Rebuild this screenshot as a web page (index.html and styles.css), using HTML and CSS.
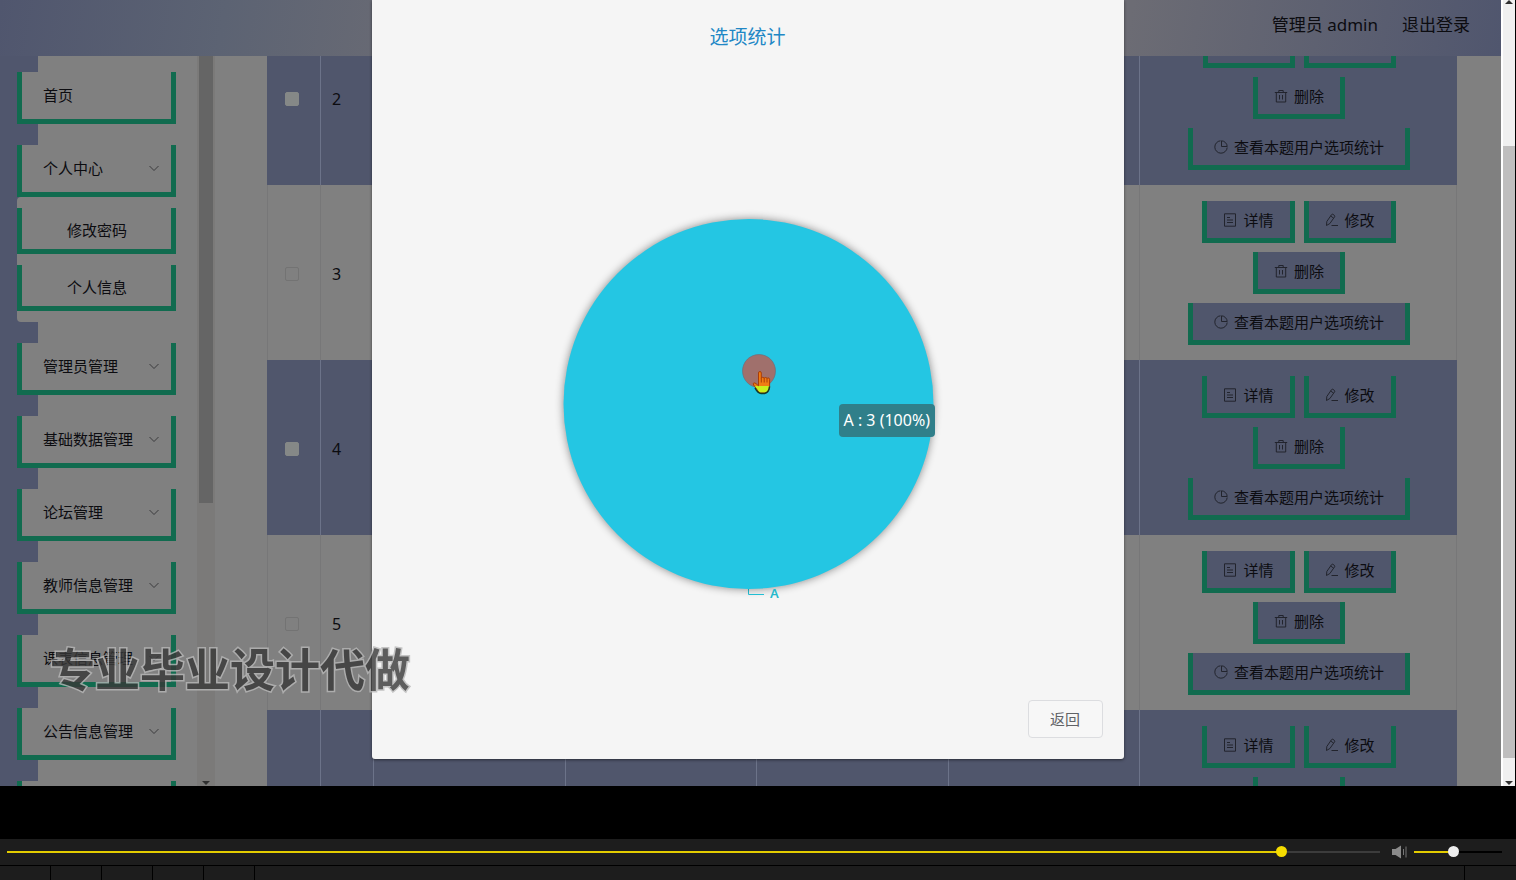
FILE: index.html
```
<!DOCTYPE html>
<html lang="zh-CN">
<head>
  <meta charset="UTF-8">
  <meta name="viewport" content="width=device-width, initial-scale=1.0">
  <title>选项统计</title>
  <link rel="stylesheet" href="styles.css">
</head>
<body>
  <!-- shared icons -->
  <svg class="sprite" aria-hidden="true">
    <symbol id="icon-down" viewBox="0 0 10 10"><path d="M0.5 3 L5 7.5 L9.5 3"/></symbol>
    <symbol id="icon-detail" viewBox="0 0 14 14"><path d="M1.500 0.800h11v12.400h-11z M4 4.500h3 M4 7h6 M4 9.500h6"/></symbol>
    <symbol id="icon-edit" viewBox="0 0 14 14"><path d="M1.800 8.500 L6.600 1.600 Q7.200 0.800 8 1.400 L9.400 2.400 Q10.200 3 9.600 3.800 L4.900 10.500 L1.500 12.500 Z M5.600 3 L8.500 5 M6.500 12.500h6.500"/></symbol>
    <symbol id="icon-delete" viewBox="0 0 14 14"><path d="M0.800 3.500h12.400 M2.300 3.500v9.500h9.400v-9.500 M4.800 3.500v-2h4.400v2 M5.500 6v4.500 M8.500 6v4.500"/></symbol>
    <symbol id="icon-pie" viewBox="0 0 14 14"><path d="M6.500 0.800 A6.200 6.200 0 1 0 13.200 7.500 M7.500 0.800 A6 6 0 0 1 13.200 6.500 H7.500 Z"/></symbol>
  </svg>

  <div class="player">
    <div class="screen">
      <div class="app">
        <header class="header">
          <span>管理员 admin</span>
          <a href="#">退出登录</a>
        </header>

        <div class="layout">
          <nav class="sidebar">
            <ul class="menu">
              <li><a class="menu-item" href="#">首页</a></li>
              <li>
                <a class="menu-item" href="#">个人中心<svg class="arrow"><use href="#icon-down"/></svg></a>
                <ul class="submenu">
                  <li><a class="submenu-item" href="#">修改密码</a></li>
                  <li><a class="submenu-item" href="#">个人信息</a></li>
                </ul>
              </li>
              <li><a class="menu-item" href="#">管理员管理<svg class="arrow"><use href="#icon-down"/></svg></a></li>
              <li><a class="menu-item" href="#">基础数据管理<svg class="arrow"><use href="#icon-down"/></svg></a></li>
              <li><a class="menu-item" href="#">论坛管理<svg class="arrow"><use href="#icon-down"/></svg></a></li>
              <li><a class="menu-item" href="#">教师信息管理<svg class="arrow"><use href="#icon-down"/></svg></a></li>
              <li><a class="menu-item" href="#">课表信息管理<svg class="arrow"><use href="#icon-down"/></svg></a></li>
              <li><a class="menu-item" href="#">公告信息管理<svg class="arrow"><use href="#icon-down"/></svg></a></li>
              <li><a class="menu-item" href="#" aria-label="更多"></a></li>
            </ul>
            <div class="side-scroll"><div class="side-thumb"></div><div class="caret-down"></div></div>
          </nav>

          <main class="content">
            <table class="table">
              <colgroup>
                <col class="col-check"><col class="col-index"><col><col><col><col><col class="col-actions">
              </colgroup>
              <tbody>
                <tr>
                  <td><input type="checkbox" aria-label="选择 2"></td><td>2</td><td></td><td></td><td></td><td></td>
                  <td>
                    <div class="actions">
                      <button class="btn" aria-label="详情"></button>
                      <button class="btn" aria-label="修改"></button>
                      <button class="btn"><svg><use href="#icon-delete"/></svg>删除</button>
                      <button class="btn btn-wide"><svg><use href="#icon-pie"/></svg>查看本题用户选项统计</button>
                    </div>
                  </td>
                </tr>
                <tr>
                  <td><input type="checkbox" aria-label="选择 3"></td><td>3</td><td></td><td></td><td></td><td></td>
                  <td>
                    <div class="actions">
                      <button class="btn"><svg><use href="#icon-detail"/></svg>详情</button>
                      <button class="btn"><svg><use href="#icon-edit"/></svg>修改</button>
                      <button class="btn"><svg><use href="#icon-delete"/></svg>删除</button>
                      <button class="btn btn-wide"><svg><use href="#icon-pie"/></svg>查看本题用户选项统计</button>
                    </div>
                  </td>
                </tr>
                <tr>
                  <td><input type="checkbox" aria-label="选择 4"></td><td>4</td><td></td><td></td><td></td><td></td>
                  <td>
                    <div class="actions">
                      <button class="btn"><svg><use href="#icon-detail"/></svg>详情</button>
                      <button class="btn"><svg><use href="#icon-edit"/></svg>修改</button>
                      <button class="btn"><svg><use href="#icon-delete"/></svg>删除</button>
                      <button class="btn btn-wide"><svg><use href="#icon-pie"/></svg>查看本题用户选项统计</button>
                    </div>
                  </td>
                </tr>
                <tr>
                  <td><input type="checkbox" aria-label="选择 5"></td><td>5</td><td></td><td></td><td></td><td></td>
                  <td>
                    <div class="actions">
                      <button class="btn"><svg><use href="#icon-detail"/></svg>详情</button>
                      <button class="btn"><svg><use href="#icon-edit"/></svg>修改</button>
                      <button class="btn"><svg><use href="#icon-delete"/></svg>删除</button>
                      <button class="btn btn-wide"><svg><use href="#icon-pie"/></svg>查看本题用户选项统计</button>
                    </div>
                  </td>
                </tr>
                <tr>
                  <td></td><td></td><td></td><td></td><td></td><td></td>
                  <td>
                    <div class="actions">
                      <button class="btn"><svg><use href="#icon-detail"/></svg>详情</button>
                      <button class="btn"><svg><use href="#icon-edit"/></svg>修改</button>
                      <button class="btn" aria-label="删除"></button>
                    </div>
                  </td>
                </tr>
              </tbody>
            </table>
          </main>
        </div>

        <div class="overlay">
          <section class="dialog" role="dialog" aria-labelledby="dialog-title">
            <h1 class="dialog-title" id="dialog-title">选项统计</h1>
            <div class="chart">
              <svg class="pie" viewBox="0 0 752 640">
                <path d="M376.500 528 V534.500 H392" fill="none" stroke="#24c6dc" stroke-width="1"/>
                <circle class="slice" cx="376.500" cy="344" r="185"/>
                <text x="398" y="538">A</text>
              </svg>
              <div class="tooltip">A : 3 (100%)</div>
              <svg class="pointer" viewBox="0 0 34 42">
                <defs>
                  <linearGradient id="hand" gradientUnits="userSpaceOnUse" x1="0" y1="0" x2="0" y2="42">
                    <stop offset="0.76" stop-color="#f07c14"/>
                    <stop offset="0.76" stop-color="#c8f01e"/>
                  </linearGradient>
                </defs>
                <circle cx="17" cy="17" r="16.500" fill="#a0706c" stroke="#6d6a75" stroke-width="0.600"/>
                <path d="M16.500 30 V19 q0-1.500 1.400-1.500 t1.400 1.500 v5.500 q0-1.200 1.400-1.200 t1.500 1.200 q0-1 1.400-1 t1.400 1.200 q0-.8 1.200-.8 t1.400 1.400 V34 q-1 5-5 5 h-4 q-2 0-4-4 l-3-4 q-1-2 .5-2.200 q1.500 0 4.400 3z" fill="url(#hand)" stroke="#a83c08" stroke-width="1"/>
                <path d="M13 34 q3 5.500 6 5.500 h3.500 q4.500-1 5-7" fill="none" stroke="#143c28" stroke-width="1.500"/>
                <path d="M19.300 24.500v4 M22.200 24.500v4 M25 25v3.500" fill="none" stroke="#a83c08" stroke-width="1"/>
              </svg>
            </div>
            <div class="dialog-footer"><button class="back">返回</button></div>
          </section>
        </div>
      </div>

      <div class="page-scroll">
        <div class="caret-up"></div>
        <div class="page-thumb"></div>
        <div class="caret-down"></div>
      </div>
      <div class="watermark">专业毕业设计代做</div>
    </div>

    <div class="controls">
      <input class="range seek" type="range" min="0" max="1000" value="932" aria-label="播放进度">
      <svg class="speaker" viewBox="0 0 16 14">
        <path d="M0 4h3.500L9 0.500v13L3.500 10H0z" fill="#8a8a8a"/>
        <path d="M11.500 4v6 M14 1.500v11" stroke="#777" stroke-width="1"/>
      </svg>
      <input class="range volume" type="range" min="0" max="100" value="44" aria-label="音量">
    </div>
    <div class="status">
      <span></span><span></span><span></span><span></span><span></span>
      <span class="status-end"></span>
    </div>
  </div>
</body>
</html>
```

FILE: styles.css
```
* {
  box-sizing: border-box;
}

body {
  margin: 0;
  background: #000;
  color: #0c0c10;
  font-family: "Noto Sans", "Noto Sans CJK SC", sans-serif;
  font-size: 15px;
}

ul {
  list-style: none;
  margin: 0;
  padding: 0;
}

a {
  color: inherit;
  text-decoration: none;
}

button {
  font: inherit;
  color: inherit;
}

.sprite {
  position: absolute;
  width: 0;
  height: 0;
}

.player {
  display: flex;
  flex-direction: column;
  height: 100vh;
  overflow: hidden;
}

.screen {
  position: relative;
  display: flex;
  flex: 1;
  min-height: 0;
  margin-bottom: 53px;
  overflow: hidden;
}

.app {
  position: relative;
  display: flex;
  flex-direction: column;
  flex: 1;
  min-width: 0;
  background: #808080;
}

/* Top bar */
.header {
  display: flex;
  flex: none;
  align-items: center;
  justify-content: flex-end;
  gap: 24px;
  height: 56px;
  padding: 0 31px 10px 0;
  background: linear-gradient(100deg, #50566e, #5c6373 15%, #6c6c74 30%, #6c6c74 75%, #50566e);
  font-size: 17px;
}

.layout {
  display: flex;
  flex: 1;
  min-height: 0;
  overflow: hidden;
}

/* Sidebar */
.sidebar {
  display: flex;
  flex: none;
  justify-content: space-between;
  width: 215px;
  background: linear-gradient(to right, #50566d 38px, #808080 38px);
}

.menu {
  display: flex;
  flex-direction: column;
  gap: 21px;
  width: 176px;
  padding: 16px 0 0 17px;
}

.menu-item,
.submenu-item {
  display: flex;
  align-items: center;
  justify-content: space-between;
  height: 52px;
  padding: 0 12px 2px 21px;
  border: 5px solid #116b4f;
  border-top: 0;
  background: #808080;
}

.submenu {
  display: flex;
  flex-direction: column;
  gap: 11px;
  padding: 11px 0;
  border-radius: 4px;
  background: #808080;
}

.submenu-item {
  height: 46px;
  padding: 2px 0 0 45px;
}

.arrow {
  width: 10px;
  height: 10px;
  fill: none;
  stroke: #3a3a3d;
}

.side-scroll {
  display: flex;
  flex-direction: column;
  align-items: center;
  width: 18px;
  padding-bottom: 1px;
  background: #7b7a79;
}

.side-thumb {
  width: 14px;
  height: 447px;
  margin-bottom: auto;
  background: #656565;
}

.caret-down,
.caret-up {
  flex: none;
  width: 8px;
  height: 4px;
  background: #303030;
  clip-path: polygon(0 0, 100% 0, 50% 100%);
}

.caret-up {
  clip-path: polygon(0 100%, 100% 100%, 50% 0);
}

/* Table, scrolled partly under the top bar */
.content {
  flex: 1;
  min-width: 0;
  padding: 0 44px 0 52px;
}

.table {
  width: 100%;
  margin-top: -46px;
  border-collapse: separate;
  border-spacing: 0;
  table-layout: fixed;
  font-size: 16px;
}

.col-check {
  width: 54px;
}

.col-index {
  width: 53px;
}

.col-actions {
  width: 317px;
}

.table td {
  height: 175px;
  padding: 2px 11px 0;
  border-right: 1px solid #777778;
}

.table td:first-child {
  padding: 2px 0 0 17px;
  border-left: 1px solid #777778;
}

.table tr:nth-child(odd) td {
  border-color: #6c7389;
  background: #50566c;
}

.table tr:nth-child(odd) td:first-child {
  border-left-color: #50566c;
}

.table tr:nth-child(odd) td:last-child {
  border-right-color: #50566c;
}

.table td:last-child {
  padding: 16px 10px 15px 12px;
  vertical-align: top;
}

.table input {
  display: block;
  width: 14px;
  height: 14px;
  margin: 0;
  border: 1px solid #737373;
  border-radius: 2px;
  appearance: none;
}

.table tr:nth-child(odd) input {
  border-color: #858887;
  background: #858887;
}

.actions {
  display: flex;
  flex-wrap: wrap;
  justify-content: center;
  gap: 9px;
  padding: 0 50px;
}

.actions .btn:nth-child(3) {
  margin: 0 50px;
}

.actions .btn-wide {
  margin: 0 -14px;
}

.btn {
  display: flex;
  flex: none;
  align-items: center;
  gap: 6px;
  min-width: 92px;
  height: 42px;
  padding: 0 16px;
  border: 5px solid #116b4f;
  border-top: 0;
  background: #50566c;
  font-size: 15px;
  white-space: nowrap;
}

.btn-wide {
  padding: 0 21px;
}

.btn svg {
  width: 14px;
  height: 14px;
  fill: none;
  stroke: #22242d;
}

/* Statistics dialog */
.overlay {
  position: absolute;
  inset: 0 6px 0 0;
  display: flex;
  align-items: flex-start;
  justify-content: center;
}

.dialog {
  flex: 0 1 752px;
  min-width: 0;
  border-radius: 0 0 3px 3px;
  background: #f5f5f5;
  box-shadow: 0 1px 3px rgba(0, 0, 0, 0.5);
}

.dialog-title {
  margin: 0;
  padding-top: 24px;
  color: #2187c5;
  font-size: 19px;
  font-weight: 400;
  line-height: 26px;
  text-align: center;
}

.chart {
  position: relative;
  height: 650px;
}

.pie {
  display: block;
  width: 100%;
  padding-top: 10px;
}

.slice {
  fill: #24c6e3;
  filter: drop-shadow(0 0 4px rgba(0, 0, 0, 0.45));
}

.pie text {
  fill: #24b9cc;
  font-size: 13px;
  font-weight: 600;
}

.tooltip {
  position: absolute;
  top: 354px;
  left: 467px;
  padding: 5px;
  border-radius: 4px;
  background: #307f8a;
  color: #fff;
  font-size: 16px;
  line-height: 23px;
  white-space: nowrap;
}

.pointer {
  position: absolute;
  top: 304px;
  left: 370px;
  width: 34px;
  height: 42px;
}

.dialog-footer {
  display: flex;
  justify-content: flex-end;
  padding: 0 21px 21px;
}

.back {
  width: 75px;
  height: 38px;
  padding: 0 0 2px;
  border: 1px solid #dcdde0;
  border-radius: 4px;
  background: #f7f7f7;
  color: #606266;
}

/* Scrollbar at the right of the page */
.page-scroll {
  display: flex;
  flex: none;
  flex-direction: column;
  align-items: center;
  width: 15px;
  padding-bottom: 1px;
  border-left: 2px solid #fff;
  border-right: 1px solid #000;
  background: #f0f0f0;
}

.page-thumb {
  flex: 1;
  width: 100%;
  margin: 142px 0 23px;
  background: #bfbebe;
}

.watermark {
  position: absolute;
  top: 637px;
  left: 50px;
  color: #383838;
  font-size: 45px;
  font-weight: 700;
  line-height: 66px;
  opacity: 0.8;
  paint-order: stroke fill;
  white-space: nowrap;
  -webkit-text-stroke: 3px #b8b8b8;
}

/* Player controls */
.controls {
  display: flex;
  flex: none;
  align-items: center;
  height: 26px;
  padding: 0 14px 0 7px;
  background: #1d1d1d;
}

.range {
  height: 12px;
  margin: 0;
  appearance: none;
  background: transparent;
}

.range::-webkit-slider-runnable-track {
  height: 2px;
}

.range::-webkit-slider-thumb {
  width: 11px;
  height: 11px;
  margin-top: -5px;
  border-radius: 50%;
  appearance: none;
  background: #f5dc00;
}

.seek {
  flex: 1;
}

.seek::-webkit-slider-runnable-track {
  background: linear-gradient(to right, #e3cc00 93%, #3c3c3c 93%);
}

.volume {
  width: 88px;
}

.volume::-webkit-slider-runnable-track {
  background: linear-gradient(to right, #e3cc00 44%, #000 44%);
}

.volume::-webkit-slider-thumb {
  background: #eee;
}

.speaker {
  width: 16px;
  height: 14px;
  margin: 0 6px 0 12px;
}

.status {
  display: flex;
  flex: none;
  height: 15px;
  border-top: 1px solid #000;
  background: #1d1d1d;
}

.status span {
  width: 51px;
  border-right: 1px solid #000;
}

.status .status-end {
  width: 52px;
  margin-left: auto;
  border-right: 0;
  border-left: 1px solid #000;
}
```
